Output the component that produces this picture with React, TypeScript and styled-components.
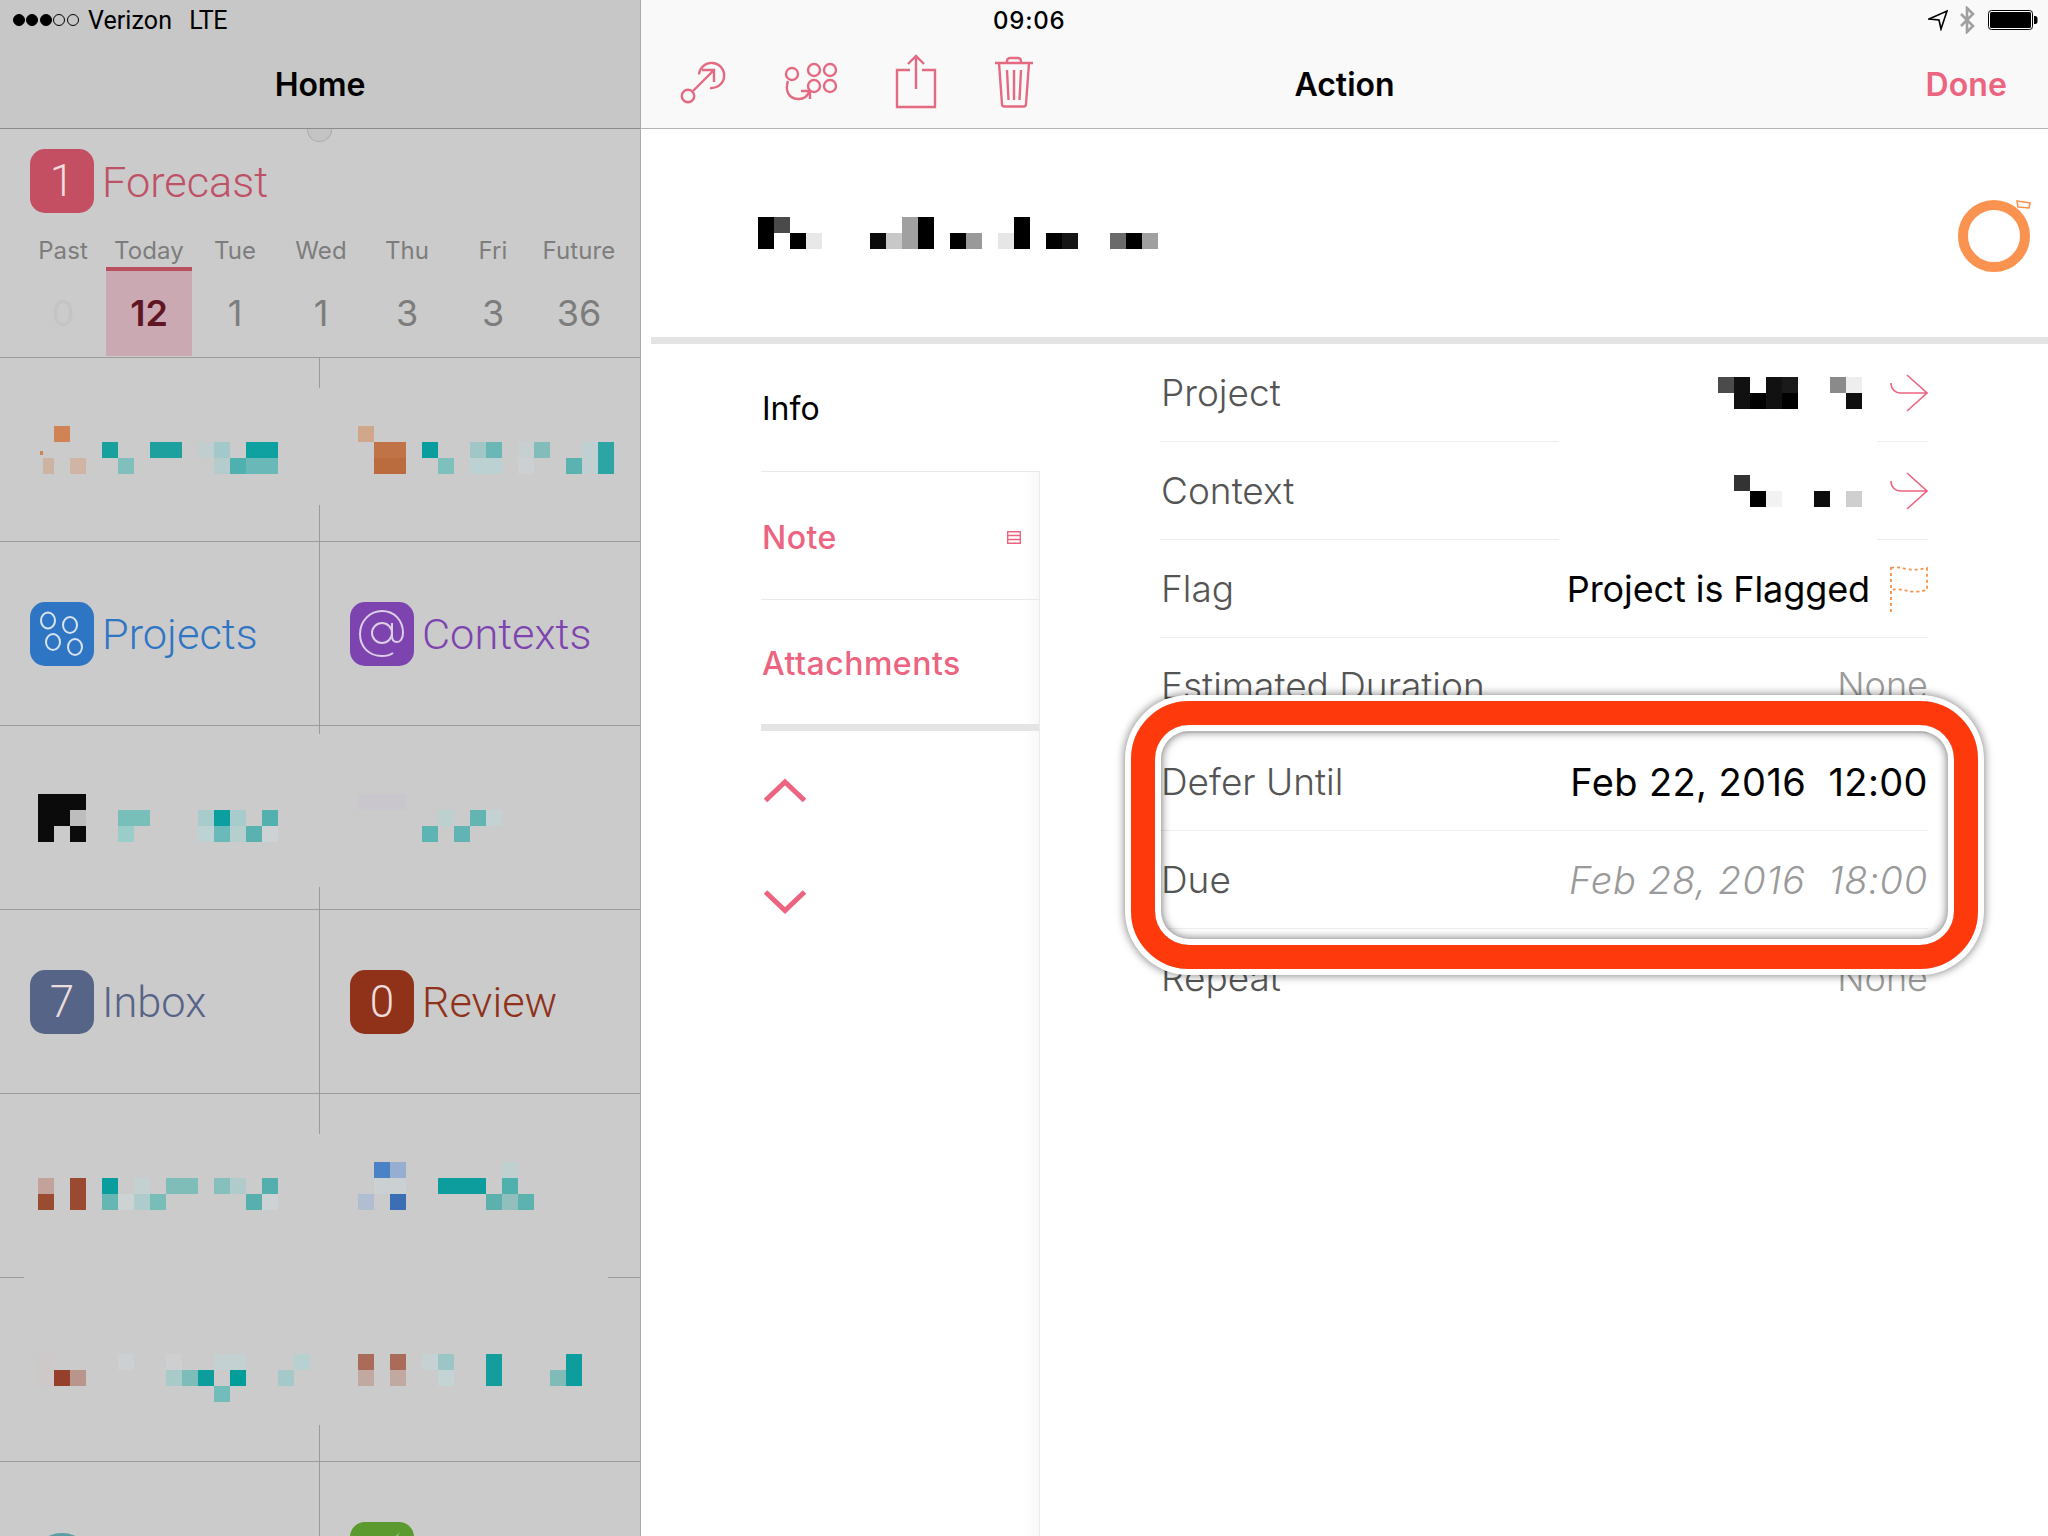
import * as React from "react";
import styled, { createGlobalStyle } from "styled-components";

type Cell = [number, number, string, number?, number?];

const PINK = "#ec6480";
const TEAL = "#0d9d9c";

const GlobalStyle = createGlobalStyle`
    html, body {
        margin: 0;
        width: 2048px;
        height: 1536px;
        overflow: hidden;
        background: #fff;
        font-family: Inter, "Liberation Sans", sans-serif;
    }
`;

const Page = styled.div`
    display: flex;
    width: 2048px;
    height: 1536px;
    overflow: hidden;
`;

/* left panel */
const HomePanel = styled.div`
    width: 640px;
    flex: none;
    background: #cbcbcb;
    border-right: 1px solid #a9a9a9;
`;

const HomeHeader = styled.div`
    height: 128px;
    background: #c7c7c7;
    border-bottom: 1px solid #8c8c8c;
`;

const CarrierBar = styled.div`
    display: flex;
    align-items: center;
    height: 40px;
    padding-left: 13px;
    font-family: Roboto, sans-serif;
    font-size: 25px;
    color: #000;
`;

const SignalDot = styled.span<{ $on: boolean }>`
    width: 10px;
    height: 10px;
    margin-right: 1.4px;
    border-radius: 50%;
    border: 1px solid #000;
    background: ${(p) => (p.$on ? "#000" : "transparent")};
`;

const Carrier = styled.span`
    margin-left: 8px;
    letter-spacing: 0.1px;
`;

const Network = styled.span`
    margin-left: 17px;
    letter-spacing: -0.4px;
`;

const NavTitle = styled.div`
    height: 88px;
    display: flex;
    align-items: center;
    justify-content: center;
    font-size: 32px;
    font-weight: 600;
    letter-spacing: -0.1px;
    color: #000;
`;

const ForecastSection = styled.div`
    position: relative;
    height: 208px;
    padding-top: 20px;
    border-bottom: 1px solid #9b9b9b;
`;

const Handle = styled.div`
    position: absolute;
    top: 0;
    left: 307px;
    width: 23px;
    height: 12px;
    background: #c4c4c4;
    border: 1px solid #ababab;
    border-top: none;
    border-radius: 0 0 13px 13px;
`;

const Tile = styled.div`
    display: flex;
    align-items: center;
    gap: 8px;
    padding-left: 30px;
`;

const Badge = styled.div<{ $color: string }>`
    width: 64px;
    height: 64px;
    flex: none;
    display: flex;
    align-items: center;
    justify-content: center;
    border-radius: 15px;
    background: ${(p) => p.$color};
    color: #ecdcdc;
    font-family: Roboto, sans-serif;
    font-size: 44px;
    font-weight: 300;
`;

const TileLabel = styled.span<{ $color: string }>`
    margin-top: 2px;
    font-family: Roboto, sans-serif;
    font-size: 43.3px;
    font-weight: 300;
    color: ${(p) => p.$color};
`;

const Days = styled.div`
    display: grid;
    grid-template-columns: repeat(7, 86px);
    margin: 20px 0 0 20px;
`;

const DayLabel = styled.div`
    height: 34px;
    display: flex;
    align-items: center;
    justify-content: center;
    font-size: 24px;
    letter-spacing: 0.1px;
    color: #7d7d7d;
`;

const DayCount = styled.div<{ $current?: boolean; $muted?: boolean }>`
    height: 83px;
    padding-bottom: 2px;
    margin-bottom: 1px;
    display: flex;
    align-items: center;
    justify-content: center;
    font-size: 36px;
    font-weight: ${(p) => (p.$current ? 600 : 400)};
    color: ${(p) => (p.$current ? "#601525" : p.$muted ? "#c4c4c4" : "#7d7d7d")};
    background: ${(p) => (p.$current ? "#cba9b2" : "transparent")};
    border-top: 4px solid ${(p) => (p.$current ? "#b9505f" : "transparent")};
`;

const TileRow = styled.div<{ $top: number; $bottom: number }>`
    position: relative;
    display: grid;
    grid-template-columns: 320px 320px;
    align-items: center;
    height: 183px;
    &::before, &::after {
        content: "";
        position: absolute;
        left: 319px;
        width: 1px;
        background: #9b9b9b;
    }
    &::before {
        top: 0;
        height: ${(p) => p.$top}px;
    }
    &::after {
        bottom: 0;
        height: ${(p) => p.$bottom}px;
    }
`;

const MosaicRow = styled(TileRow)<{ $offset: number }>`
    align-items: start;
    padding-top: ${(p) => p.$offset}px;
    height: ${(p) => 183 - p.$offset}px;
`;

const LastRow = styled(TileRow)`
    align-items: start;
    padding-top: 60px;
    height: 123px;
`;

const Rule = styled.div`
    height: 1px;
    background: #9b9b9b;
`;

const SplitRule = styled.div`
    height: 1px;
    background: linear-gradient(to right, #9b9b9b 24px, transparent 24px, transparent 608px, #9b9b9b 608px);
`;

const MosaicSlot = styled.div`
    padding-left: 38px;
    line-height: 0;
`;

const RoundBadge = styled.div`
    width: 64px;
    height: 64px;
    margin-top: 11px;
    border-radius: 50%;
    background: #5b9ea3;
`;

/* right panel */
const ActionPanel = styled.div`
    flex: 1;
    min-width: 0;
    background: #fff;
`;

const ActionHeader = styled.div`
    height: 128px;
    background: #f9f9f9;
    border-bottom: 1px solid #b4b4b4;
`;

const StatusBar = styled.div`
    height: 40px;
    display: flex;
    align-items: center;
    justify-content: space-between;
    padding: 0 10px 0 352px;
`;

const Clock = styled.span`
    font-size: 24px;
    font-weight: 500;
    letter-spacing: 0.8px;
    color: #000;
`;

const StatusIcons = styled.div`
    display: flex;
    align-items: center;
    gap: 11px;
`;

const NavBar = styled.div`
    height: 88px;
    display: grid;
    grid-template-columns: 1fr auto 1fr;
    align-items: center;
`;

const Tools = styled.div`
    display: flex;
    align-items: center;
    gap: 54px;
    padding-left: 37px;
`;

const ToolIcon = styled.svg`
    display: block;
    height: 60px;
    fill: none;
    stroke: #e46a82;
    stroke-width: 2.4;
`;

const ActionTitle = styled.div`
    font-size: 32px;
    font-weight: 600;
    letter-spacing: 0;
    color: #000;
`;

const DoneButton = styled.div`
    justify-self: end;
    padding-right: 41px;
    font-size: 32px;
    font-weight: 600;
    letter-spacing: 0.1px;
    color: ${PINK};
`;

const TitleSection = styled.div`
    height: 208px;
    display: flex;
    align-items: center;
    justify-content: space-between;
    padding: 0 16px 0 117px;
    box-sizing: border-box;
`;

const StatusRing = styled.svg`
    display: block;
    margin-top: 6px;
`;

const ThickRule = styled.div`
    height: 7px;
    margin-left: 10px;
    background: #e4e4e4;
`;

const Body = styled.div`
    display: flex;
    padding-left: 120px;
`;

const SideColumn = styled.div`
    width: 279px;
    flex: none;
`;

const SideInfo = styled.div`
    height: 127px;
    display: flex;
    align-items: center;
    padding: 2px 0 0 1px;
    box-sizing: border-box;
    font-size: 32px;
    color: #000;
`;

const SideBody = styled.div`
    height: 1065px;
    border-right: 1px solid #eaeaea;
    background: linear-gradient(to right, #fff 262px, #f8f8f8 279px);
`;

const SideRow = styled.div<{ $height: number }>`
    height: ${(p) => p.$height}px;
    display: flex;
    align-items: center;
    justify-content: space-between;
    box-sizing: border-box;
    padding: 3px 18px 0 1px;
    border-top: 1px solid #e9e9e9;
    font-size: 32px;
    letter-spacing: 0.5px;
    font-weight: 500;
    color: ${PINK};
`;

const SideThick = styled.div`
    height: 7px;
    background: #e4e4e4;
`;

const Stepper = styled.div`
    display: flex;
    flex-direction: column;
    gap: 88px;
    padding: 47px 0 0 3px;
`;

const Chevron = styled.svg`
    display: block;
    fill: none;
    stroke: ${PINK};
    stroke-width: 5;
`;

const Form = styled.div`
    flex: 1;
    padding: 0 120px;
`;

const FieldRow = styled.div<{ $height?: number }>`
    height: ${(p) => p.$height || 97}px;
    display: flex;
    align-items: center;
    justify-content: space-between;
    padding-left: 1px;
    font-size: 37px;
    font-weight: 300;
`;

const FieldLabel = styled.span`
    color: #555;
`;

const FieldValue = styled.span<{ $tone?: string; $spread?: number; $size?: number }>`
    font-size: ${(p) => p.$size || 36}px;
    font-weight: ${(p) => (p.$tone ? 300 : 400)};
    font-style: ${(p) => (p.$tone === "due" ? "italic" : "normal")};
    color: ${(p) => (p.$tone ? "#9a9a9a" : "#000")};
    letter-spacing: ${(p) => p.$spread || 0}px;
    white-space: pre;
`;

const ValueGroup = styled.div<{ $gap: number }>`
    display: flex;
    align-items: center;
    gap: ${(p) => p.$gap}px;
`;

const FieldRule = styled.div<{ $gapped?: boolean }>`
    height: 1px;
    background: ${(p) => (p.$gapped
        ? "linear-gradient(to right, #eee 399px, transparent 399px, transparent 717px, #eee 717px)"
        : "#eee")};
`;

const Callout = styled.div`
    position: absolute;
    left: 1131px;
    top: 701px;
    width: 847px;
    height: 268px;
    box-sizing: border-box;
    border: 24px solid #fe3a0d;
    border-radius: 58px;
    box-shadow:
        0 0 0 6px #fff,
        0 0 8px 7px rgba(0, 0, 0, 0.45),
        inset 0 0 0 6px #fff,
        inset 0 0 8px 7px rgba(0, 0, 0, 0.5);
`;

/* blurred text in the screenshot */
const Mosaic = (props: { cells: Cell[]; cols: number; rows?: number }) => {
    const rows = props.rows || 3;
    return (
        <svg width={props.cols * 16} height={rows * 16} shapeRendering="crispEdges" style={{ display: "block" }}>
            {props.cells.map(([x, y, color, w, h], i) => (
                <rect key={i} x={x * 16} y={y * 16} width={(w || 1) * 16} height={(h || 1) * 16} fill={color} />
            ))}
        </svg>
    );
};

const row1Left: Cell[] = [
    [1, 0, "#d08455"], [4, 1, "#17a09e"], [7, 1, "#1da09e", 2], [10, 1, "#c0ced0"], [11, 1, "#a3c8ca"], [13, 1, "#0fa0a0", 2],
    [0.15, 1.55, "#d08455", 0.15, 0.25],
    [0.3, 2, "#cdb3a2", 0.7], [2, 2, "#d0b5a5"], [5, 2, "#7fc0bc"], [11, 2, "#b5cccc"], [12, 2, "#4fb0b0"], [13, 2, "#6ab8b8", 2],
];
const row1Right: Cell[] = [
    [0, 0, "#d1a78c"], [1, 1, "#bf7347", 2], [4, 1, "#0a9d9d"], [7, 1, "#a0c6c6"], [8, 1, "#6ab7b5"], [10, 1, "#c8cfd1"], [11, 1, "#83bdba"],
    [14, 1, "#c0cfd1"], [15, 1, "#2ea5a5"], [1, 2, "#bb6c3e", 2], [5, 2, "#7dc0bc"], [7, 2, "#bcd2d2", 2], [10, 2, "#cdd0d2"],
    [13, 2, "#5cb2b0"], [14, 2, "#c0cfd1"], [15, 2, "#2ea5a5"],
];
const row3Left: Cell[] = [
    [0, 0, "#0b0b0b", 3], [0, 1, "#0b0b0b", 2], [2, 1, "#bdbdbd"], [5, 1, "#78bfba", 2], [10, 1, "#a8cbcb"], [11, 1, "#0c9f9f"], [12, 1, "#a8cbcb"], [14, 1, "#52b0ae"],
    [0, 2, "#0b0b0b"], [2, 2, "#0b0b0b"], [5, 2, "#9accc8"], [10, 2, "#bcd2d3"], [11, 2, "#6cb9b9"], [12, 2, "#b5cfcf"], [13, 2, "#59b2b0"], [14, 2, "#cdd3d5"],
];
const row3Right: Cell[] = [
    [0, 0, "#c9c7cd", 3], [5, 1, "#bcd0d0"], [7, 1, "#62b5b3"], [8, 1, "#c5d2d3"], [4, 2, "#5eb3b3"], [6, 2, "#62b4b4"],
];
const row5Left: Cell[] = [
    [0, 1, "#c2a29a"], [2, 1, "#9a4a30"], [4, 1, "#0a9d9d"], [6, 1, "#c5d0d0"], [8, 1, "#7fbdb9", 2], [11, 1, "#86bfbc"], [12, 1, "#b1cbcb"], [14, 1, "#52afad"],
    [0, 2, "#9a4c31"], [2, 2, "#9a4a30"], [4, 2, "#66b6b3"], [5, 2, "#cdd3d3"], [6, 2, "#aecccc"], [7, 2, "#79bdb9"], [13, 2, "#57b0ae"], [14, 2, "#cdd3d5"],
];
const row5Right: Cell[] = [
    [1, 0, "#4b82c6"], [2, 0, "#96aed2"], [9, 0, "#c0d0d1"], [1, 1, "#cbd0d3", 2], [5, 1, TEAL, 3], [9, 1, "#50b0ad"],
    [0, 2, "#b1bdd0"], [2, 2, "#3a6fb3"], [8, 2, "#5cb1ae"], [9, 2, "#92bfbe"], [10, 2, "#5cb2ae"],
];
const row6Left: Cell[] = [
    [0, 0, "#cdc9c9"], [5, 0, "#cdd0d2"], [8, 0, "#cdcfd0"], [11, 0, "#c3d1d3", 2], [16, 0, "#b7d0d0"],
    [0, 1, "#cfc8c8"], [1, 1, "#94402a"], [2, 1, "#b9968c"], [8, 1, "#a8cbca"], [9, 1, "#7dbdb9"], [10, 1, TEAL], [12, 1, "#009d9a"], [15, 1, "#a5c9c9"],
    [11, 2, "#73bcbc"],
];
const row6Right: Cell[] = [
    [0, 0, "#aa6c58"], [2, 0, "#aa6c58"], [4, 0, "#c5d1d2"], [5, 0, "#9cc6c5"], [8, 0, "#139d9c"], [13, 0, TEAL],
    [0, 1, "#c1a9a1"], [2, 1, "#c1a9a1"], [5, 1, "#c4d3d3"], [8, 1, "#139d9c"], [12, 1, "#7fbcb8"], [13, 1, TEAL],
];
const titleCells: Cell[] = [
    [0, 0, "#000"], [1, 0, "#4a4a4a"], [9, 0, "#a0a0a0"], [10, 0, "#000"], [16, 0, "#000"],
    [0, 1, "#000"], [2, 1, "#000"], [3, 1, "#e8e8e8"], [7, 1, "#0a0a0a"], [8, 1, "#c8c8c8"], [9, 1, "#a0a0a0"], [10, 1, "#000"],
    [12, 1, "#000"], [13, 1, "#999"], [15, 1, "#e6e6e6"], [16, 1, "#000"], [18, 1, "#000"], [19, 1, "#151515"],
    [22, 1, "#6a6a6a"], [23, 1, "#000"], [24, 1, "#a0a0a0"],
];
const projectCells: Cell[] = [
    [0, 0, "#4b4b4b"], [1, 0, "#111"], [3, 0, "#111"], [4, 0, "#1a1a1a"], [7, 0, "#8a8a8a"], [8, 0, "#eee"],
    [1, 1, "#111"], [2, 1, "#000"], [3, 1, "#111"], [4, 1, "#000"], [8, 1, "#0e0e0e"],
];
const contextCells: Cell[] = [
    [1, 0, "#333"], [2, 1, "#000"], [3, 1, "#f2f2f2"], [6, 1, "#0c0c0c"], [8, 1, "#cfcfcf"],
];

const days = [
    { name: "Past", count: "0", muted: true },
    { name: "Today", count: "12", current: true },
    { name: "Tue", count: "1" },
    { name: "Wed", count: "1" },
    { name: "Thu", count: "3" },
    { name: "Fri", count: "3" },
    { name: "Future", count: "36" },
];

const ProjectsGlyph = () => (
    <svg width="64" height="64" fill="none" stroke="#d9e3ef" strokeWidth="2">
        <ellipse cx="18" cy="18.5" rx="7" ry="8" />
        <ellipse cx="40" cy="23" rx="7" ry="8" />
        <ellipse cx="23" cy="40" rx="7" ry="8" />
        <ellipse cx="45" cy="45" rx="7" ry="8" />
    </svg>
);

const ContextsGlyph = () => (
    <svg width="64" height="64" fill="none" stroke="#dccfe6" strokeWidth="2">
        <circle cx="32" cy="31" r="10" />
        <path d="M42 21v13c0 4 2 6 5 6s6-3 6-9c0-13-9-22-21-22S10 19 10 32s9 22 22 22c5 0 8-1 11-3" />
    </svg>
);

const CheckGlyph = () => (
    <svg width="64" height="64">
        <path d="M16 32l10 12L50 10 28 34z" fill="#fff" />
    </svg>
);

const LinkArrow = () => (
    <svg width="38" height="40" viewBox="0 0 38 40" fill="none" stroke={PINK} strokeWidth="1.6" style={{ display: "block" }}>
        <path d="M1 10c0 6 4 10 10 10h26M17 2l20 18-20 18" />
    </svg>
);

const DashedFlag = () => (
    <svg width="38" height="48" viewBox="0 0 38 48" fill="none" stroke="#f3914a" strokeWidth="1.8" strokeDasharray="3 3" style={{ display: "block" }}>
        <path d="M1 2v46M1 3c12-3 14 5 36 0v22c-20 5-22-3-36 0" />
    </svg>
);

const App = () => {
    return (
        <Page>
            <GlobalStyle />
            <HomePanel>
                <HomeHeader>
                    <CarrierBar>
                        {[true, true, true, false, false].map((on, i) => <SignalDot key={i} $on={on} />)}
                        <Carrier>Verizon</Carrier>
                        <Network>LTE</Network>
                    </CarrierBar>
                    <NavTitle>Home</NavTitle>
                </HomeHeader>

                <ForecastSection>
                    <Handle />
                    <Tile>
                        <Badge $color="#c44f62">1</Badge>
                        <TileLabel $color="#bf5166">Forecast</TileLabel>
                    </Tile>
                    <Days>
                        {days.map((d) => <DayLabel key={d.name}>{d.name}</DayLabel>)}
                        {days.map((d) => (
                            <DayCount key={d.name} $current={d.current} $muted={d.muted}>{d.count}</DayCount>
                        ))}
                    </Days>
                </ForecastSection>

                <MosaicRow $top={30} $bottom={36} $offset={68}>
                    <MosaicSlot><Mosaic cells={row1Left} cols={17} /></MosaicSlot>
                    <MosaicSlot><Mosaic cells={row1Right} cols={17} /></MosaicSlot>
                </MosaicRow>
                <Rule />
                <TileRow $top={183} $bottom={0}>
                    <Tile>
                        <Badge $color="#2e76c4"><ProjectsGlyph /></Badge>
                        <TileLabel $color="#2e76c4">Projects</TileLabel>
                    </Tile>
                    <Tile>
                        <Badge $color="#7d44b0"><ContextsGlyph /></Badge>
                        <TileLabel $color="#7d44b0">Contexts</TileLabel>
                    </Tile>
                </TileRow>
                <Rule />
                <MosaicRow $top={8} $bottom={22} $offset={68}>
                    <MosaicSlot><Mosaic cells={row3Left} cols={17} /></MosaicSlot>
                    <MosaicSlot><Mosaic cells={row3Right} cols={17} /></MosaicSlot>
                </MosaicRow>
                <Rule />
                <TileRow $top={183} $bottom={0}>
                    <Tile>
                        <Badge $color="#566488">7</Badge>
                        <TileLabel $color="#566488">Inbox</TileLabel>
                    </Tile>
                    <Tile>
                        <Badge $color="#8f3219">0</Badge>
                        <TileLabel $color="#8f3219">Review</TileLabel>
                    </Tile>
                </TileRow>
                <Rule />
                <MosaicRow $top={40} $bottom={0} $offset={68}>
                    <MosaicSlot><Mosaic cells={row5Left} cols={17} /></MosaicSlot>
                    <MosaicSlot><Mosaic cells={row5Right} cols={17} /></MosaicSlot>
                </MosaicRow>
                <SplitRule />
                <MosaicRow $top={0} $bottom={36} $offset={76}>
                    <MosaicSlot><Mosaic cells={row6Left} cols={17} /></MosaicSlot>
                    <MosaicSlot><Mosaic cells={row6Right} cols={17} /></MosaicSlot>
                </MosaicRow>
                <Rule />
                <LastRow $top={183} $bottom={0}>
                    <Tile><RoundBadge /></Tile>
                    <Tile><Badge $color="#5a9a2e"><CheckGlyph /></Badge></Tile>
                </LastRow>
            </HomePanel>

            <ActionPanel>
                <ActionHeader>
                    <StatusBar>
                        <Clock>09:06</Clock>
                        <StatusIcons>
                            <svg width="20" height="22" viewBox="0 0 20 22" fill="none" stroke="#000" strokeWidth="1.6">
                                <path d="M1 10L19 2l-6 18-2-9z" />
                            </svg>
                            <svg width="16" height="28" viewBox="0 0 16 28" fill="none" stroke="#a0a0a0" strokeWidth="2.6">
                                <path d="M2 8l12 12-6 6V2l6 6L2 20" />
                            </svg>
                            <svg width="50" height="20" viewBox="0 0 50 20" style={{ marginLeft: 2 }}>
                                <rect x="0.5" y="0.5" width="44" height="19" rx="3" fill="#fff" stroke="#000" />
                                <rect x="2" y="2" width="41" height="16" rx="1.5" fill="#000" />
                                <path d="M46 6h1a2.5 2.5 0 0 1 2.5 2.5v3A2.5 2.5 0 0 1 47 14h-1z" fill="#000" />
                            </svg>
                        </StatusIcons>
                    </StatusBar>
                    <NavBar>
                        <Tools>
                            <ToolIcon width="48" viewBox="0 0 48 60">
                                <circle cx="10" cy="42" r="6.2" />
                                <path d="M15 37l20-20M24 16h12v12" />
                                <path d="M21 20.5a12.6 12.6 0 1 1 11 13.5" />
                            </ToolIcon>
                            <ToolIcon width="60" viewBox="0 0 60 60">
                                <circle cx="12" cy="20" r="6" />
                                <circle cx="34" cy="16" r="6" />
                                <circle cx="50" cy="16" r="6" />
                                <circle cx="34" cy="32" r="6" />
                                <circle cx="50" cy="32" r="6" />
                                <path d="M8 27c-3 9 0 18 11 18 5 0 8-2 10-7M21 37h9v8" />
                            </ToolIcon>
                            <ToolIcon width="44" viewBox="0 0 44 60">
                                <path d="M16 16H3v37h38V16H28M22 35V2M14 10l8-8 8 8" />
                            </ToolIcon>
                            <ToolIcon width="44" viewBox="0 0 44 60">
                                <path d="M3 9h38M15 9V7a3 3 0 0 1 3-3h8a3 3 0 0 1 3 3v2" />
                                <path d="M7 9l3 41a2.5 2.5 0 0 0 2.5 2.5h19A2.5 2.5 0 0 0 34 50l3-41" />
                                <path d="M15 16l1.5 30M22 16v30M29 16l-1.5 30" />
                            </ToolIcon>
                        </Tools>
                        <ActionTitle>Action</ActionTitle>
                        <DoneButton>Done</DoneButton>
                    </NavBar>
                </ActionHeader>

                <TitleSection>
                    <Mosaic cells={titleCells} cols={25} rows={2} />
                    <StatusRing width="74" height="76" viewBox="0 0 74 76" fill="none" stroke="#fb9350">
                        <circle cx="36" cy="38" r="31" strokeWidth="10" />
                        <path d="M59 3l13 2-1 5-11-1z" strokeWidth="1.6" />
                    </StatusRing>
                </TitleSection>
                <ThickRule />

                <Body>
                    <SideColumn>
                        <SideInfo>Info</SideInfo>
                        <SideBody>
                            <SideRow $height={128}>
                                Note
                                <svg width="14" height="13" viewBox="0 0 14 13" fill="none" stroke={PINK} strokeWidth="1.4">
                                    <path d="M.7.7h12.6v11.6H.7zM.7 4.5h12.6M.7 8.5h12.6" />
                                </svg>
                            </SideRow>
                            <SideRow $height={125}>Attachments</SideRow>
                            <SideThick />
                            <Stepper>
                                <Chevron width="42" height="24" viewBox="0 0 42 24"><path d="M1.5 22.5L21 4l19.5 18.5" /></Chevron>
                                <Chevron width="42" height="24" viewBox="0 0 42 24"><path d="M1.5 2L21 20.5 40.5 2" /></Chevron>
                            </Stepper>
                        </SideBody>
                    </SideColumn>

                    <Form>
                        <FieldRow>
                            <FieldLabel>Project</FieldLabel>
                            <ValueGroup $gap={28}>
                                <Mosaic cells={projectCells} cols={9} rows={2} />
                                <LinkArrow />
                            </ValueGroup>
                        </FieldRow>
                        <FieldRule $gapped />
                        <FieldRow>
                            <FieldLabel>Context</FieldLabel>
                            <ValueGroup $gap={28}>
                                <Mosaic cells={contextCells} cols={9} rows={2} />
                                <LinkArrow />
                            </ValueGroup>
                        </FieldRow>
                        <FieldRule $gapped />
                        <FieldRow>
                            <FieldLabel>Flag</FieldLabel>
                            <ValueGroup $gap={20}>
                                <FieldValue $spread={-0.1}>Project is Flagged</FieldValue>
                                <DashedFlag />
                            </ValueGroup>
                        </FieldRow>
                        <FieldRule />
                        <FieldRow $height={94}>
                            <FieldLabel>Estimated Duration</FieldLabel>
                            <FieldValue $tone="none">None</FieldValue>
                        </FieldRow>
                        <FieldRule />
                        <FieldRow>
                            <FieldLabel>Defer Until</FieldLabel>
                            <FieldValue $size={38} $spread={0.4}>{"Feb 22, 2016  12:00"}</FieldValue>
                        </FieldRow>
                        <FieldRule />
                        <FieldRow>
                            <FieldLabel>Due</FieldLabel>
                            <FieldValue $tone="due" $size={38} $spread={0.75}>{"Feb 28, 2016  18:00"}</FieldValue>
                        </FieldRow>
                        <FieldRule />
                        <FieldRow>
                            <FieldLabel>Repeat</FieldLabel>
                            <FieldValue $tone="none">None</FieldValue>
                        </FieldRow>
                    </Form>
                </Body>
            </ActionPanel>
            <Callout />
        </Page>
    );
};

export default App;
